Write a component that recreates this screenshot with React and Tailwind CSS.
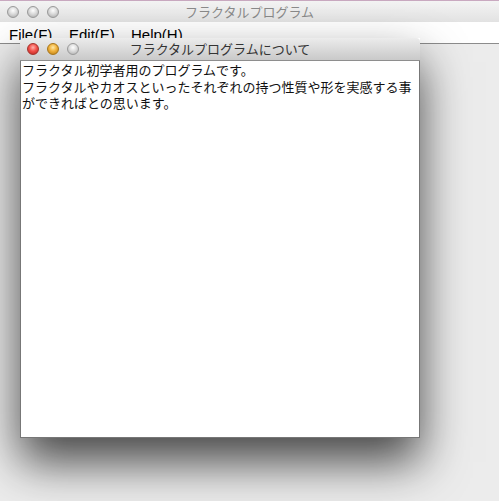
import React from 'react';

const Light = ({ color }) => {
  const styles = {
    red: 'bg-[radial-gradient(circle_at_50%_35%,#ffb3ad_0%,#f2504a_45%,#b8231d_100%)] border-[#a3322c]',
    yellow: 'bg-[radial-gradient(circle_at_50%_35%,#ffe9a8_0%,#f0b23c_45%,#b87a12_100%)] border-[#a87618]',
    gray: 'bg-[radial-gradient(circle_at_50%_35%,#ffffff_0%,#dcdcdc_45%,#a9a9a9_100%)] border-[#9a9a9a]',
  };
  return <div className={`w-[12px] h-[12px] rounded-full border ${styles[color]}`} />;
};

const App = () => {
  return (
    <div
      className="relative w-full h-[501px] bg-[#ececec] overflow-hidden"
      style={{ fontFamily: '"Liberation Sans", "Noto Sans CJK JP", sans-serif' }}
    >
      {/* メインウィンドウのタイトルバー */}
      <div className="relative h-[22px] bg-gradient-to-b from-[#f4f4f4] to-[#e2e2e2] border-t border-[#c9a9c0] flex items-center">
        <div className="flex gap-[8px] pl-[7px]">
          <Light color="gray" />
          <Light color="gray" />
          <Light color="gray" />
        </div>
        <div
          className="absolute inset-0 flex items-center justify-center text-[13px] text-[#8a8a8a]"
          style={{ fontFamily: '"Noto Sans CJK JP", sans-serif' }}
        >
          フラクタルプログラム
        </div>
      </div>

      {/* メニューバー */}
      <div className="relative h-[22px] bg-white border-b border-[#8c8c8c] text-[15px] text-black leading-none">
        <span className="absolute left-[9px] bottom-[1px]">File(F)</span>
        <span className="absolute left-[69px] bottom-[1px]">Edit(E)</span>
        <span className="absolute left-[131px] bottom-[1px]">Help(H)</span>
      </div>

      {/* ダイアログ */}
      <div className="absolute left-[20px] top-[38px] w-[400px] h-[400px] flex flex-col shadow-[0_24px_44px_rgba(0,0,0,0.7)]">
        <div className="relative h-[23px] rounded-t-[4px] bg-gradient-to-b from-[#ececec] to-[#c9c9c9] border-b border-[#8e8e8e] flex items-center">
          <div className="flex gap-[8px] pl-[7px]">
            <Light color="red" />
            <Light color="yellow" />
            <Light color="gray" />
          </div>
          <div
            className="absolute inset-0 flex items-center justify-center text-[13px] text-[#333]"
            style={{ fontFamily: '"Noto Sans CJK JP", sans-serif' }}
          >
            フラクタルプログラムについて
          </div>
        </div>
        <div
          className="flex-1 bg-white border-x border-b border-[#777] px-[1px] pt-[1px] text-[13px] leading-[16.5px] text-[#111]"
          style={{ fontFamily: '"Noto Sans CJK JP", sans-serif' }}
        >
          <p>フラクタル初学者用のプログラムです。</p>
          <p>フラクタルやカオスといったそれぞれの持つ性質や形を実感する事</p>
          <p>ができればとの思います。</p>
        </div>
      </div>
    </div>
  );
};

export default App;
